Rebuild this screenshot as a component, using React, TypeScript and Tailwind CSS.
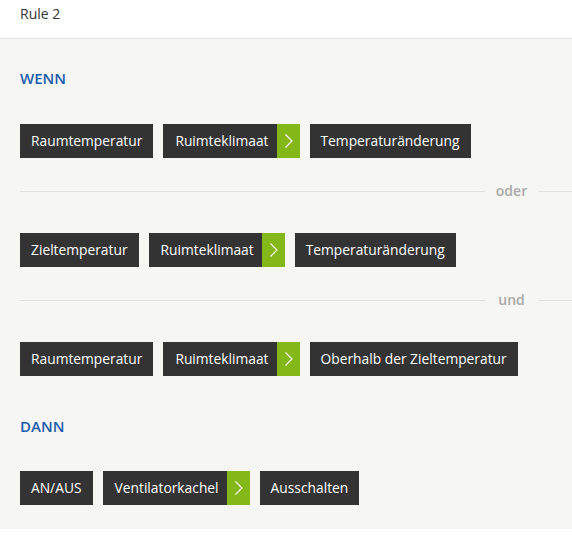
import React from 'react';

type Chip = { label: string; arrow?: boolean };

const rows: { chips: Chip[] }[] = [
  { chips: [{ label: 'Raumtemperatur' }, { label: 'Ruimteklimaat', arrow: true }, { label: 'Temperaturänderung' }] },
  { chips: [{ label: 'Zieltemperatur' }, { label: 'Ruimteklimaat', arrow: true }, { label: 'Temperaturänderung' }] },
  { chips: [{ label: 'Raumtemperatur' }, { label: 'Ruimteklimaat', arrow: true }, { label: 'Oberhalb der Zieltemperatur' }] },
];

function Tag({ label, arrow }: Chip) {
  return (
    <div className="flex h-[34px] bg-[#333333] text-white">
      <span className={`flex items-center text-[13.8px] leading-5 ${arrow ? 'pl-[12px] pr-[8px]' : 'px-[11px]'}`}>{label}</span>
      {arrow && (
        <span className="flex w-[23px] items-center justify-center bg-[#84b818]">
          <svg width="23" height="34" viewBox="0 0 23 34" fill="none">
            <path d="M8.5 10.5 L15 17 L8.5 23.5" stroke="#ffffff" strokeWidth="1.1" />
          </svg>
        </span>
      )}
    </div>
  );
}

function Divider({ label }: { label: string }) {
  return (
    <div className="flex h-5 items-center">
      <div className="h-px flex-1 bg-[#e2e2df]" />
      <span className="w-[53px] text-center text-[14px] font-semibold leading-5 text-[#a9a9a9]">{label}</span>
      <div className="h-px w-[34px] bg-[#e2e2df]" />
    </div>
  );
}

export default function App() {
  return (
    <div className="w-[572px] bg-white font-['Open_Sans',sans-serif]" style={{ height: 537 }}>
      {/* Header */}
      <div className="h-[39px] border-b border-[#e4e4e2] px-5 pt-[4px] text-[14px] leading-5 text-[#333333]">
        Rule 2
      </div>

      {/* Body */}
      <div className="bg-[#f6f6f4] pl-5 pt-[29px] pb-[24px]">
        <h3 className="text-[15px] font-semibold leading-5 text-[#1b5cab]">WENN</h3>

        <div className="mt-[36px] flex gap-[10px]">
          {rows[0].chips.map((c, i) => <Tag key={i} {...c} />)}
        </div>
        <div className="mt-[23px] mb-[32px]">
          <Divider label="oder" />
        </div>
        <div className="flex gap-[10px]">
          {rows[1].chips.map((c, i) => <Tag key={i} {...c} />)}
        </div>
        <div className="mt-[23px] mb-[32px]">
          <Divider label="und" />
        </div>
        <div className="flex gap-[10px]">
          {rows[2].chips.map((c, i) => <Tag key={i} {...c} />)}
        </div>

        <h3 className="mt-[40px] text-[15px] font-semibold leading-5 text-[#1b5cab]">DANN</h3>

        <div className="mt-[35px] flex gap-[10px]">
          <Tag label="AN/AUS" />
          <Tag label="Ventilatorkachel" arrow />
          <Tag label="Ausschalten" />
        </div>
      </div>
    </div>
  );
}
